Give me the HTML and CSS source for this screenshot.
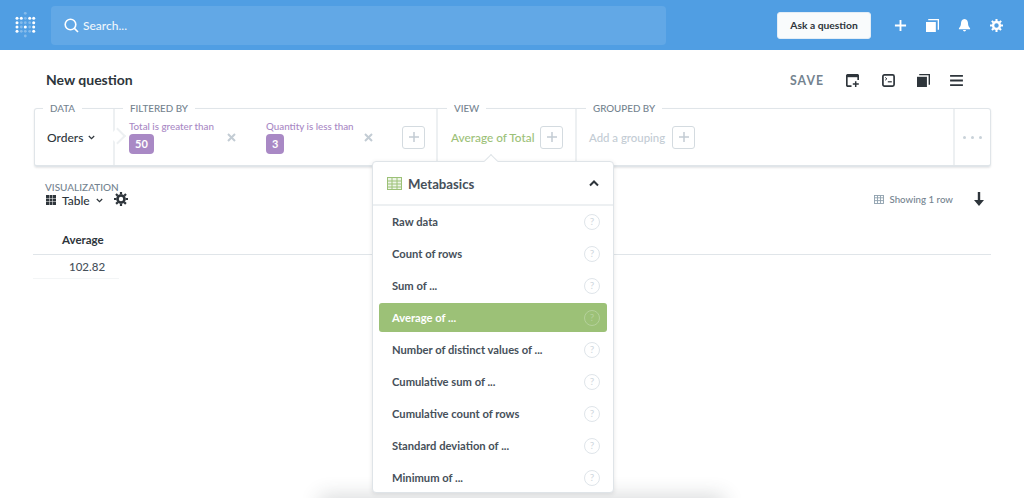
FILE: index.html
```html
<!DOCTYPE html>
<html lang="en">
<head>
<meta charset="utf-8">
<title>New question</title>
<link rel="stylesheet" href="styles.css">
</head>
<body>
<header class="nav">
  <svg class="logo" width="22" height="26" viewBox="0 0 22 26" fill="#fff">
    <g opacity=".3"><circle cx="10.300" cy="1.300" r="1.400"/><circle cx="10.300" cy="6.300" r="1.400"/><circle cx="6.300" cy="10.700" r="1.400"/><circle cx="10.300" cy="10.700" r="1.400"/><circle cx="14.700" cy="10.700" r="1.400"/><circle cx="6.300" cy="15" r="1.400"/><circle cx="14.700" cy="15" r="1.400"/><circle cx="6.300" cy="19.300" r="1.400"/><circle cx="10.300" cy="19.300" r="1.400"/><circle cx="14.700" cy="19.300" r="1.400"/><circle cx="10.300" cy="24" r="1.400"/></g>
    <g><circle cx="2" cy="6.300" r="1.500"/><circle cx="6.300" cy="6.300" r="1.500"/><circle cx="14.700" cy="6.300" r="1.500"/><circle cx="18.700" cy="6.300" r="1.500"/><circle cx="2" cy="10.700" r="1.500"/><circle cx="18.700" cy="10.700" r="1.500"/><circle cx="2" cy="15" r="1.500"/><circle cx="10.300" cy="15" r="1.500"/><circle cx="18.700" cy="15" r="1.500"/><circle cx="2" cy="19.300" r="1.500"/><circle cx="18.700" cy="19.300" r="1.500"/></g>
  </svg>
  <div class="search">
    <svg width="15" height="15" viewBox="0 0 15 15" fill="none" stroke="#fff" stroke-width="1.600"><circle cx="6.500" cy="6.500" r="5.300"/><path d="M10.400 10.400 14 14"/></svg>
    <span>Search...</span>
  </div>
  <button class="ask">Ask a question</button>
  <div class="nav-icons">
    <svg width="13" height="13" viewBox="0 0 14 14" fill="none" stroke="#fff" stroke-width="2"><path d="M7 1v12M1 7h12"/></svg>
    <svg width="13" height="13" viewBox="0 0 14 14" fill="#fff"><path d="M0 3.200 0 14h10.600V3.200z"/><path d="M2.400 0H14v11.600h-1.400V1.400H2.400z"/></svg>
    <svg width="13" height="14" viewBox="0 0 14 15" fill="#fff"><path d="M7 1C4.200 1 3.200 3.400 3.200 6c0 2.600-1 3.800-2.200 5v1h12v-1c-1.200-1.200-2.200-2.400-2.200-5C10.800 3.400 9.800 1 7 1z"/><path d="M5.400 13h3.200a1.600 1.600 0 0 1-3.200 0z"/></svg>
    <svg width="13" height="13" viewBox="0 0 14 14"><circle cx="7" cy="7" r="3.700" fill="none" stroke="#fff" stroke-width="2.600"/><path d="M7 0v14M0 7h14M2 2l10 10M12 2 2 12" stroke="#fff" stroke-width="2.200" stroke-dasharray="2.400 9.200 2.400"/></svg>
  </div>
</header>

<section class="titlebar">
  <h1>New question</h1>
  <div class="actions">
    <span class="save">SAVE</span>
    <svg width="13" height="13" viewBox="0 0 13 13" fill="none" stroke="#2e353b" stroke-width="1.700"><path d="M5.500 12.100H1.800a1 1 0 0 1-1-1V1.800a1 1 0 0 1 1-1h9.400a1 1 0 0 1 1 1V6"/><path d="M1 1h11v2.200H1z" fill="#2e353b" stroke="none"/><path d="M9.700 7.200V13M6.800 10.100h6" stroke-width="1.500"/></svg>
    <svg width="13" height="13" viewBox="0 0 13 13" fill="none" stroke="#2e353b" stroke-width="1.700"><rect x=".9" y=".9" width="11.200" height="11.200" rx="1.500"/><path d="m3.200 3.400 1.700 1.400-1.700 1.400" stroke-width="1"/><path d="M5.800 7.800h4" stroke-width="1.200"/></svg>
    <svg class="book" width="13" height="13" viewBox="0 0 14 14" fill="#2e353b"><path d="M0 3v11h10.700V3z"/><path d="M2.400 0H14v11.600h-1.500V1.400H2.400z"/></svg>
    <svg class="menu" width="13" height="11" viewBox="0 0 14 12" fill="#2e353b"><path d="M0 0h14v2H0zM0 5h14v2H0zM0 10h14v2H0z"/></svg>
  </div>
</section>

<section class="builder">
  <div class="clause clause-data">
    <span class="legend">DATA</span>
    <span class="orders">Orders<svg class="chev" width="7" height="5" viewBox="0 0 7 5" fill="none" stroke="#2e353b" stroke-width="1.200"><path d="m.8 1 2.700 2.700L6.200 1"/></svg></span>
  </div>
  <div class="clause clause-filter">
    <span class="legend">FILTERED BY</span>
    <div class="filter f1"><span class="ftext">Total is greater than</span><span class="badge">50</span></div>
    <svg class="x x1" width="9" height="9" viewBox="0 0 9 9" stroke="#c3ccd4" stroke-width="2"><path d="m1 1 7 7M8 1 1 8"/></svg>
    <div class="filter f2"><span class="ftext">Quantity is less than</span><span class="badge">3</span></div>
    <svg class="x x2" width="9" height="9" viewBox="0 0 9 9" stroke="#c3ccd4" stroke-width="2"><path d="m1 1 7 7M8 1 1 8"/></svg>
    <span class="plus plus-filter"><svg width="12" height="12" viewBox="0 0 12 12" stroke="#c3ccd4" stroke-width="1.500"><path d="M6 1v10M1 6h10"/></svg></span>
  </div>
  <div class="clause clause-view">
    <span class="legend">VIEW</span>
    <span class="view-text">Average of Total</span>
    <span class="plus"><svg width="12" height="12" viewBox="0 0 12 12" stroke="#c3ccd4" stroke-width="1.500"><path d="M6 1v10M1 6h10"/></svg></span>
  </div>
  <div class="clause clause-group">
    <span class="legend">GROUPED BY</span>
    <span class="group-text">Add a grouping</span>
    <span class="plus"><svg width="12" height="12" viewBox="0 0 12 12" stroke="#c3ccd4" stroke-width="1.500"><path d="M6 1v10M1 6h10"/></svg></span>
  </div>
  <div class="clause-more"><i></i><i></i><i></i></div>
</section>

<section class="viz">
  <div class="viz-left">
    <span class="viz-label">VISUALIZATION</span>
    <div class="viz-row">
      <svg width="10" height="10" viewBox="0 0 10 10" fill="#2e353b"><path d="M0 0h3v3H0zM3.500 0h3v3h-3zM7 0h3v3H7zM0 3.500h3v3H0zM3.500 3.500h3v3h-3zM7 3.500h3v3H7zM0 7h3v3H0zM3.500 7h3v3h-3zM7 7h3v3H7z"/></svg>
      <span class="viz-name">Table</span>
      <svg width="7" height="5" viewBox="0 0 7 5" fill="none" stroke="#2e353b" stroke-width="1.200"><path d="m.8 1 2.700 2.700L6.200 1"/></svg>
      <svg class="viz-gear" width="14" height="14" viewBox="0 0 14 14"><circle cx="7" cy="7" r="3.500" fill="none" stroke="#2e353b" stroke-width="2.600"/><path d="M7 0v14M0 7h14M2 2l10 10M12 2 2 12" stroke="#2e353b" stroke-width="2.200" stroke-dasharray="2.400 9.200 2.400"/></svg>
    </div>
  </div>
  <div class="viz-right">
    <svg width="10" height="9" viewBox="0 0 10 9" fill="none" stroke="#8fa0ae" stroke-width=".9"><rect x=".5" y=".5" width="9" height="8"/><path d="M.5 2.800h9M.5 5.600h9M3.500.5v8M6.500.5v8"/></svg>
    <span class="rows">Showing 1 row</span>
    <svg class="down" width="10" height="14" viewBox="0 0 10 14" fill="#2e353b"><path d="M3.800 0h2.400v8H10l-5 6-5-6h3.800z"/></svg>
  </div>
</section>

<section class="table">
  <div class="thead"><span>Average</span></div>
  <div class="tcell">102.82</div>
</section>

<div class="popover">
  <span class="arrow"></span>
  <div class="pop-head">
    <svg width="15" height="13" viewBox="0 0 15 13" fill="#eef5e8" stroke="#9cc177" stroke-width="1"><rect x=".5" y=".5" width="14" height="12"/><path d="M.5 4h14M.5 7h14M.5 10h14M5 .5v12M10 .5v12" fill="none"/></svg>
    <span class="pop-title">Metabasics</span>
    <svg class="pop-chev" width="10" height="7" viewBox="0 0 10 7" fill="none" stroke="#2e353b" stroke-width="2"><path d="m1 5.500 4-4 4 4"/></svg>
  </div>
  <ul class="pop-list">
    <li class="pop-item"><span>Raw data</span><b class="q">?</b></li>
    <li class="pop-item"><span>Count of rows</span><b class="q">?</b></li>
    <li class="pop-item"><span>Sum of ...</span><b class="q">?</b></li>
    <li class="pop-item active"><span>Average of ...</span><b class="q">?</b></li>
    <li class="pop-item"><span>Number of distinct values of ...</span><b class="q">?</b></li>
    <li class="pop-item"><span>Cumulative sum of ...</span><b class="q">?</b></li>
    <li class="pop-item"><span>Cumulative count of rows</span><b class="q">?</b></li>
    <li class="pop-item"><span>Standard deviation of ...</span><b class="q">?</b></li>
    <li class="pop-item"><span>Minimum of ...</span><b class="q">?</b></li>
  </ul>
</div>
<div class="bottom-shadow"></div>
</body>
</html>
```

FILE: styles.css
```css
* { box-sizing: border-box; }
html, body { margin: 0; height: 498px; overflow: hidden; }
body { position: relative; background: #fff; font-family: Lato, "Open Sans", sans-serif; color: #2e353b; font-size: 12px; }

.nav { height: 50px; background: #509ee3; display: flex; align-items: center; padding-left: 15px; }
.logo { flex: none; width: 22px; height: 26px; margin-right: 14px; }
.search { width: 615px; height: 39px; background: #62a8e6; border-radius: 4px; display: flex; align-items: center; gap: 4px; padding-left: 13px; color: #fff; font-size: 12px; font-weight: 500; }
.search span { opacity: .9; }
.ask { margin-left: 111px; width: 94px; height: 27px; background: #f9fbfc; border: 1px solid #e3edf6; border-radius: 3px; font: 700 10.300px Lato, sans-serif; color: #2e353b; padding: 0; }
.nav-icons { display: flex; align-items: center; gap: 19px; margin-left: 23px; }

.titlebar { height: 58px; display: flex; align-items: center; justify-content: space-between; padding: 2px 61px 0 46px; }
h1 { margin: -2px 0 0; font-size: 14px; font-weight: 700; color: #2e353b; }
.actions { display: flex; align-items: center; gap: 23px; }
.save { font-size: 12.300px; font-weight: 700; letter-spacing: 1px; color: #74838f; margin-right: -1px; }
.book { margin-left: -1px; }
.menu { margin-left: -3px; }

.builder { margin: 0 33px 0 34px; height: 59px; display: flex; border: 1px solid #e0e5e9; border-bottom-width: 2px; border-radius: 3px; box-shadow: 0 1px 2px rgba(46,53,59,.12); }
.clause { position: relative; display: flex; align-items: center; border-right: 2px solid #edf0f2; height: 100%; }
.legend { position: absolute; top: -7px; background: #fff; padding: 0 7px; font-size: 9.800px; line-height: 13px; color: #74838f; font-weight: 500; white-space: nowrap; }
.clause-data { width: 80px; padding-left: 12px; }
.clause-data .legend { left: 8px; }
.orders { font-size: 12px; font-weight: 500; display: flex; align-items: center; gap: 5px; }
.clause-filter { width: 323px; padding-left: 14px; }
.clause-filter::before { content: ""; position: absolute; left: -2px; top: 21px; width: 10px; height: 10px; background: #fff; border: 2px solid #edf0f2; border-width: 2px 2px 0 0; transform: rotate(45deg) translate(-1px, 1px); }
.clause-filter .legend { left: 8px; }
.filter { display: flex; flex-direction: column; align-items: flex-start; width: 89px; }
.ftext { font-size: 9.800px; font-weight: 500; line-height: 12px; color: #a989c5; white-space: nowrap; margin-top: -1px; }
.badge { margin-top: 2px; height: 20px; min-width: 16px; padding: 0 6px; border-radius: 4px; background: #a989c5; color: #fff; font-size: 11px; font-weight: 700; line-height: 20px; text-align: center; }
.x { flex: none; }
.x1 { margin-left: 9px; }
.f2 { margin-left: 30px; }
.x2 { margin-left: 9px; }
.plus { flex: none; width: 23px; height: 23px; display: flex; align-items: center; justify-content: center; border: 1px solid #d4dbe0; border-radius: 3px; }
.plus-filter { margin-left: 29px; }
.clause-view { width: 139px; padding-left: 13px; gap: 6px; }
.clause-view .legend { left: 9px; }
.view-text { font-size: 11.800px; font-weight: 500; color: #9cc177; white-space: nowrap; }
.clause-group { flex: 1; padding-left: 12px; gap: 7px; }
.clause-group .legend { left: 9px; }
.group-text { font-size: 11.400px; font-weight: 500; color: #c3ccd4; white-space: nowrap; }
.clause-more { width: 35px; display: flex; align-items: center; justify-content: center; gap: 5px; }
.clause-more i { width: 3px; height: 3px; border-radius: 50%; background: #c9d2d9; }

.viz { display: flex; justify-content: space-between; align-items: flex-start; margin-top: 14px; padding: 0 40px 0 45px; }
.viz-left { display: flex; flex-direction: column; }
.viz-label { font-size: 10px; line-height: 12px; color: #74838f; font-weight: 500; }
.viz-row { display: flex; align-items: center; margin-top: 0; height: 14px; padding-left: 1px; }
.viz-name { font-size: 12px; font-weight: 500; margin: 0 6px; }
.viz-gear { margin-left: 11px; margin-top: -3px; }
.viz-right { display: flex; align-items: center; margin-top: 11px; }
.rows { font-size: 9.700px; font-weight: 500; color: #74838f; margin-left: 6px; }
.down { margin-left: 21px; }

.table { margin: 20px 33px 0; }
.thead { height: 28px; border-bottom: 1px solid #e0e5e9; padding: 0 0 0 29px; font-size: 11.500px; font-weight: 700; line-height: 26px; color: #2e353b; }
.tcell { width: 86px; height: 24px; border-bottom: 1px solid #f3f5f6; padding-left: 36px; font-size: 11.500px; font-weight: 500; line-height: 23px; color: #46505a; }

.popover { position: absolute; left: 372px; top: 161px; width: 242px; height: 332px; background: #fff; border: 1px solid #dfe4e8; border-radius: 4px; box-shadow: 0 1px 4px rgba(46,53,59,.12); z-index: 2; }
.arrow { position: absolute; left: 113px; top: -6px; width: 10px; height: 10px; background: #fff; border: 1px solid #dfe4e8; border-width: 1px 0 0 1px; transform: rotate(45deg); }
.pop-head { position: relative; height: 44px; display: flex; align-items: center; padding: 0 14px; border-bottom: 2px solid #edf0f2; }
.pop-title { font-size: 13.200px; font-weight: 700; color: #46505a; margin-left: 6px; margin-top: 2px; }
.pop-chev { margin-left: auto; }
.pop-list { list-style: none; margin: 0; padding: 0 6px; }
.pop-item { display: flex; align-items: center; justify-content: space-between; height: 32px; padding: 0 7px 0 13px; margin: 0; font-size: 11.200px; font-weight: 700; color: #46505a; }
.pop-item span { margin-top: -2px; }
.active { background: #9cc177; color: #fff; border-radius: 3px; height: 29px; margin: 1px 0 2px; }
.active span { margin-top: 0; }
.q { width: 16px; height: 16px; border: 1.500px solid #dfe5ea; border-radius: 50%; color: #d0d8de; font-size: 10px; font-weight: 400; line-height: 13px; text-align: center; }
.active .q { border-color: #b5d19b; color: #b5d19b; }

.bottom-shadow { position: absolute; left: 320px; right: 300px; top: 498px; height: 20px; box-shadow: 0 -2px 20px rgba(46,53,59,.2); }
```
